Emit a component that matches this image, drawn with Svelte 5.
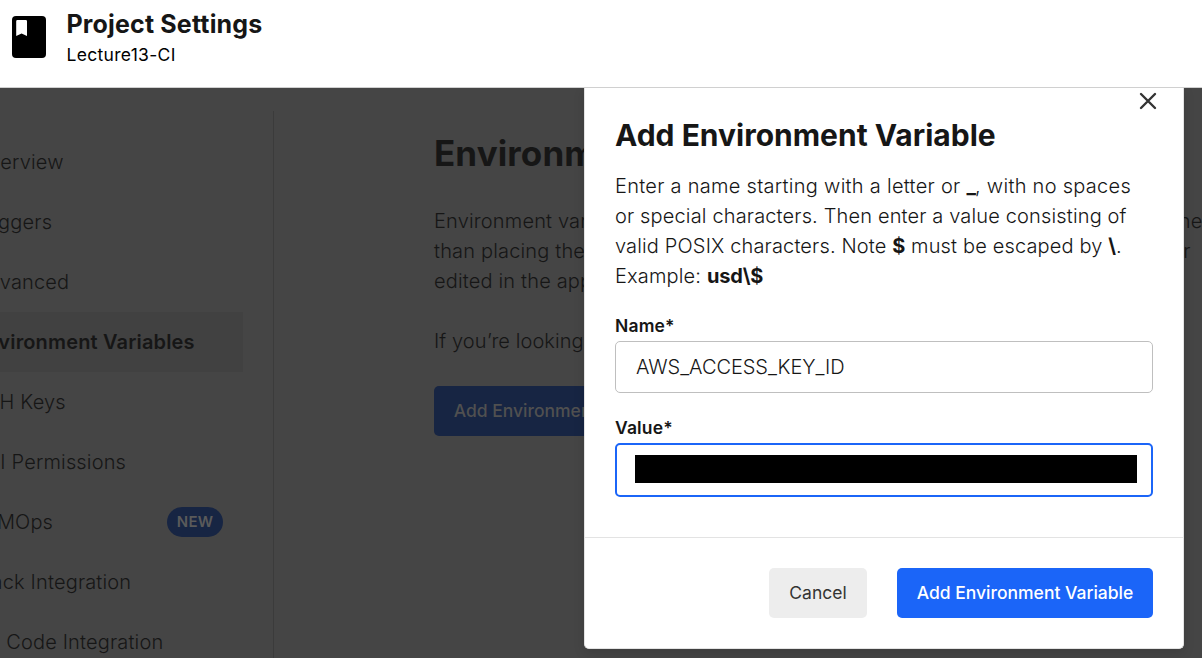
<script>
  const nav = [
    { label: 'Overview' },
    { label: 'Triggers' },
    { label: 'Advanced' },
    { label: 'Environment Variables', active: true },
    { label: 'SSH Keys' },
    { label: 'API Permissions' },
    { label: 'LLMOps', badge: 'NEW' },
    { label: 'Slack Integration' },
    { label: 'VS Code Integration' }
  ];
  const lines = [
    'Environment variables let you add sensitive data (e.g. API keys) to your jobs rather',
    'than placing them in the repository. The value of the variables cannot be read or',
    'edited in the app once they are set.'
  ];
</script>

<div class="page">
  <header>
    <svg class="book" width="34" height="42" viewBox="0 0 34 42">
      <rect width="34" height="42" rx="4" fill="#000" />
      <path d="M4.2 5.2Q4.2 4 5.4 4H13.8Q15 4 15 5.2V20L9.6 17.6L4.2 20Z" fill="#fff" />
    </svg>
    <div class="heading">
      <div class="title">Project Settings</div>
      <div class="sub">Lecture13-CI</div>
    </div>
  </header>

  <div class="stage">
    <nav>
      {#each nav as item}
        <div class="item" class:active={item.active}>
          <span>{item.label}</span>
          {#if item.badge}<span class="badge">{item.badge}</span>{/if}
        </div>
      {/each}
    </nav>

    <main>
      <h1>Environment Variables</h1>
      <div class="para">
        {#each lines as line}<div>{line}</div>{/each}
      </div>
      <div class="para second">If you’re looking to share variables across projects, try Contexts.</div>
      <div class="btn dim">Add Environment Variable</div>
    </main>

    <section class="modal">
      <svg class="close" width="18" height="18" viewBox="0 0 18 18">
        <path d="M2 2L16 16M16 2L2 16" stroke="#343434" stroke-width="2.4" stroke-linecap="round" />
      </svg>
      <div class="body">
        <h2>Add Environment Variable</h2>
        <div class="desc">
          <div class="first">Enter a name starting with a letter or <b>_</b>, with no spaces</div>
          <div>or special characters. Then enter a value consisting of</div>
          <div>valid POSIX characters. Note <b>$</b> must be escaped by <b>\</b>.</div>
          <div>Example: <b>usd\$</b></div>
        </div>
        <div class="label">Name*</div>
        <div class="field">AWS_ACCESS_KEY_ID</div>
        <div class="label value">Value*</div>
        <div class="field focus"><div class="redacted"></div></div>
      </div>
      <footer>
        <div class="btn cancel">Cancel</div>
        <div class="btn">Add Environment Variable</div>
      </footer>
    </section>
  </div>
</div>

<style>
  .page {
    width: 1202px;
    height: 658px;
    overflow: hidden;
    display: flex;
    flex-direction: column;
    background: #fff;
    font-family: Inter, sans-serif;
    color: #161616;
  }
  .page :global(*) { box-sizing: border-box; }
  header {
    height: 88px;
    flex: none;
    display: flex;
    align-items: flex-start;
    padding-left: 12px;
    border-bottom: 1px solid #d0d0d0;
  }
  .book { margin-top: 16px; }
  .heading { margin: 8px 0 0 20.5px; }
  .title { font-size: 25px; font-weight: 700; line-height: 32px; letter-spacing: 0.16px; }
  .sub { font-size: 17.5px; line-height: 26px; margin-top: 2px; letter-spacing: 0.3px; color: #000; }
  .stage {
    position: relative;
    flex: 1;
    min-height: 0;
    display: flex;
    overflow: hidden;
    background: #454545;
  }
  nav {
    flex: none;
    width: 316px;
    height: 640px;
    margin: 23px 0 0 -42px;
    padding: 21px 30px 0 0;
    border-right: 1px solid #3b3b3b;
  }
  .item {
    height: 60px;
    display: flex;
    align-items: center;
    justify-content: space-between;
    padding: 0 20px 0 16px;
    font-size: 20px;
    font-weight: 300;
    letter-spacing: 0.16px;
    white-space: nowrap;
    color: #161616;
  }
  .item.active { background: #414141; font-weight: 600; }
  .badge {
    width: 56px;
    height: 30px;
    border-radius: 15px;
    background: #172543;
    color: #5a5a5a;
    font-size: 15px;
    font-weight: 600;
    line-height: 30px;
    text-align: center;
  }
  main { flex: none; width: 800px; margin-left: 160px; padding-top: 42px; color: #161616; }
  h1 { margin: 0; font-size: 35px; line-height: 46px; font-weight: 700; letter-spacing: 0.1px; }
  .para {
    margin-top: 30px;
    font-size: 20px;
    font-weight: 300;
    line-height: 30px;
    letter-spacing: 0.165px;
    white-space: nowrap;
  }
  .second { margin-top: 30px; margin-bottom: 30px; letter-spacing: 0.08px; }
  .btn {
    width: 256px;
    height: 50px;
    border-radius: 5px;
    background: #1b65f8;
    color: #fff;
    font-size: 17.5px;
    font-weight: 500;
    line-height: 50px;
    text-align: center;
  }
  .btn.dim { background: #172543; color: #505050; }
  .btn.cancel { width: 98px; background: #ededed; color: #343434; font-weight: 400; }
  .modal {
    position: absolute;
    left: 584px;
    top: 0;
    width: 600px;
    height: 561px;
    display: flex;
    flex-direction: column;
    background: #fff;
    border: 1px solid #e3e3e3;
    border-top: 0;
    border-radius: 0 0 5px 5px;
    box-shadow: 0 4px 12px rgba(0, 0, 0, 0.12);
  }
  .close { position: absolute; right: 26px; top: 4px; }
  .body { flex: 1; padding: 27px 30px 0; }
  h2 { margin: 0; font-size: 30px; line-height: 40px; font-weight: 700; letter-spacing: 0; }
  .desc {
    margin-top: 16px;
    font-size: 20px;
    font-weight: 300;
    line-height: 30px;
    letter-spacing: 0.15px;
    white-space: nowrap;
  }
  .first { letter-spacing: 0.28px; }
  b { font-weight: 700; letter-spacing: -0.1px; }
  .first b { letter-spacing: -0.9px; }
  .label { margin-top: 24px; height: 26px; font-size: 17.5px; font-weight: 600; line-height: 22px; letter-spacing: 0.15px; }
  .field {
    height: 52px;
    border: 1px solid #bfbfbf;
    border-radius: 5px;
    padding: 0 20px;
    font-size: 20px;
    font-weight: 300;
    line-height: 50px;
    letter-spacing: -0.05px;
  }
  .field.focus { height: 54px; border: 2px solid #1b65f8; padding: 10px 14px 0 18px; }
  .redacted { height: 28px; background: #000; }
  footer {
    flex: none;
    height: 111px;
    border-top: 1px solid #e3e3e3;
    display: flex;
    justify-content: flex-end;
    gap: 30px;
    padding: 30px 30px 0;
  }
</style>
